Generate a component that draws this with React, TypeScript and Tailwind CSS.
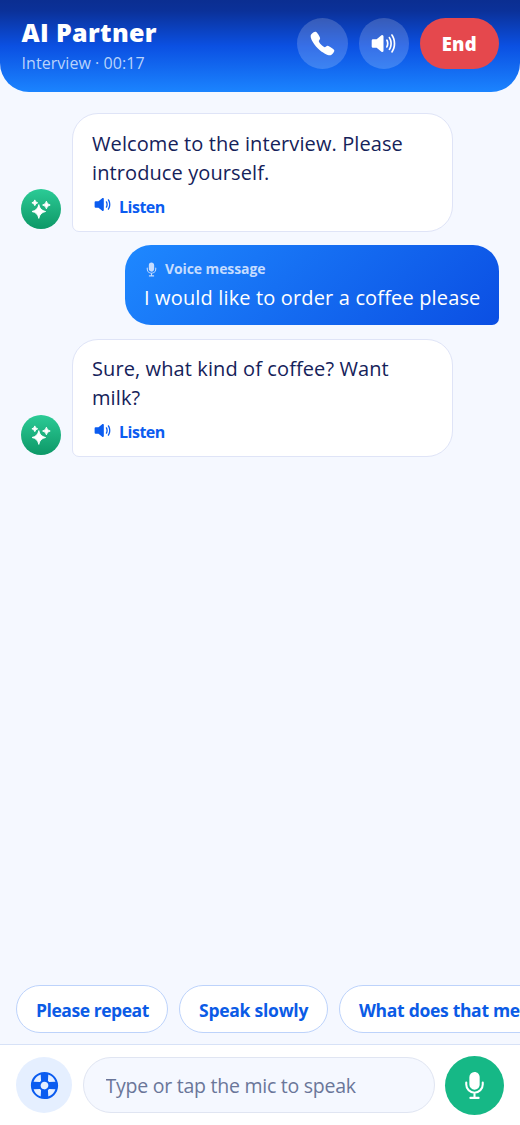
import { IoCall, IoHelpBuoy, IoMic, IoVolumeHigh, IoVolumeMedium } from 'react-icons/io5';

interface Message {
  id: number;
  from: 'partner' | 'user';
  lines: string[];
}

const messages: Message[] = [
  { id: 1, from: 'partner', lines: ['Welcome to the interview. Please', 'introduce yourself.'] },
  { id: 2, from: 'user', lines: ['I would like to order a coffee please'] },
  { id: 3, from: 'partner', lines: ['Sure, what kind of coffee? Want', 'milk?'] },
];

const quickReplies = [
  { label: 'Please repeat', width: 'w-[152px]', tracking: 'tracking-[-0.45px]' },
  { label: 'Speak slowly', width: 'w-[149px]', tracking: 'tracking-[-0.25px]' },
  { label: 'What does that mean?', width: 'w-[236px]', tracking: 'tracking-[-0.3px]' },
];

function Sparkles() {
  return (
    <svg className="size-5" viewBox="0 0 20 20" fill="currentColor" stroke="currentColor" strokeWidth={0.9} strokeLinejoin="round">
      <path d="M7.8 5.6Q8.9 11.4 14.6 12.5Q8.9 13.6 7.8 19.4Q6.7 13.6 1 12.5Q6.7 11.4 7.8 5.6Z" />
      <path d="M3.8 0.9Q4.3 3.3 6.7 3.8Q4.3 4.3 3.8 6.7Q3.3 4.3 0.9 3.8Q3.3 3.3 3.8 0.9Z" />
      <path d="M15.4 2.2Q16 5.4 19.2 6Q16 6.6 15.4 9.8Q14.8 6.6 11.6 6Q14.8 5.4 15.4 2.2Z" />
    </svg>
  );
}

function Header() {
  return (
    <header className="flex h-[92px] shrink-0 justify-between rounded-b-[29px] bg-[linear-gradient(180deg,#0b2e91_0%,#0b3199_12%,#0b50e2_50%,#1b84ff_100%)] px-[21.5px] text-white">
      <div className="pt-[17px]">
        <h1 className="text-[25px] leading-[31px] font-extrabold tracking-[0.35px]">AI Partner</h1>
        <p className="mt-[4px] text-[16px] leading-[22px] tracking-[0.05px] text-[#b9d3fb]">Interview · 00:17</p>
      </div>
      <div className="flex gap-[11px] pt-[18px]">
        <button className="flex size-[50.5px] items-center justify-center rounded-full bg-white/18">
          <IoCall size={27} />
        </button>
        <button className="flex size-[50.5px] items-center justify-center rounded-full bg-white/18">
          <IoVolumeHigh size={27} />
        </button>
        <button className="h-[50.5px] w-[78.5px] rounded-full bg-[#e5484d] pt-[2px] text-[18.5px] font-extrabold tracking-[0.2px]">
          End
        </button>
      </div>
    </header>
  );
}

function PartnerMessage({ lines }: { lines: string[] }) {
  return (
    <div className="flex items-end gap-[11px]">
      <div className="mb-[2.5px] flex size-10 items-center justify-center rounded-full bg-linear-to-b from-[#2bcb96] to-[#0c9867] text-white">
        <Sparkles />
      </div>
      <div className="h-[118.5px] w-[381px] rounded-[26px] rounded-bl-[7px] border border-[#dfe4f7] bg-white px-[19px] pt-[14.5px]">
        {lines.map((line) => (
          <p key={line} className="text-[20px] leading-[29px] tracking-[0.1px] whitespace-nowrap text-[#15225a]">
            {line}
          </p>
        ))}
        <button className="mt-[10px] flex h-5 items-center gap-[6px] text-[#0b5cf0]">
          <IoVolumeMedium size={21} className="mb-1" />
          <span className="text-[16px] leading-5 font-bold tracking-[-0.5px]">Listen</span>
        </button>
      </div>
    </div>
  );
}

function UserMessage({ lines }: { lines: string[] }) {
  return (
    <div className="h-20 w-[374px] self-end rounded-[26px] rounded-br-[7px] bg-[linear-gradient(135deg,#1e88ff_0%,#0b4fe3_100%)] px-[19px] pt-[14px] text-white">
      <div className="flex h-5 items-center gap-[5px] text-[#c5dcff]">
        <IoMic size={17} className="-ml-px" />
        <span className="text-[14px] leading-5 font-bold tracking-[-0.1px]">Voice message</span>
      </div>
      {lines.map((line) => (
        <p key={line} className="mt-[4px] text-[20px] leading-[29px] tracking-[0.15px] whitespace-nowrap">
          {line}
        </p>
      ))}
    </div>
  );
}

export default function App() {
  return (
    <div className="flex h-[1125px] w-[520px] flex-col overflow-hidden bg-[#f5f8ff] font-['Open_Sans','Noto_Sans',sans-serif]">
      <Header />

      <main className="flex flex-1 flex-col gap-[13.5px] px-[21px] pt-[21px]">
        {messages.map((message) =>
          message.from === 'partner' ? (
            <PartnerMessage key={message.id} lines={message.lines} />
          ) : (
            <UserMessage key={message.id} lines={message.lines} />
          )
        )}
      </main>

      <div className="flex gap-[11px] overflow-hidden pb-[11px] pl-4">
        {quickReplies.map((reply) => (
          <button
            key={reply.label}
            className={`${reply.width} ${reply.tracking} h-12 shrink-0 rounded-full border border-[#bdd3fb] bg-white pt-[2px] pl-[19px] text-left text-[17.5px] font-bold whitespace-nowrap text-[#0b5be6]`}
          >
            {reply.label}
          </button>
        ))}
      </div>

      <footer className="flex h-[81px] shrink-0 items-center gap-[11px] border-t border-[#d7e2f7] bg-white px-4">
        <button className="flex size-14 shrink-0 items-center justify-center rounded-full bg-[#e5efff] text-[#0b5cf0]">
          <IoHelpBuoy size={31} />
        </button>
        <input
          className="h-14 w-[352px] rounded-full border border-[#e0e5f2] bg-[#f5f8ff] px-[21.5px] pt-px text-[19.5px] tracking-[-0.25px] outline-none placeholder:text-[#6a7699]"
          placeholder="Type or tap the mic to speak"
        />
        <button className="-ml-px flex size-[59px] shrink-0 items-center justify-center rounded-full bg-[#16b886] text-white">
          <IoMic size={33} />
        </button>
      </footer>
    </div>
  );
}
